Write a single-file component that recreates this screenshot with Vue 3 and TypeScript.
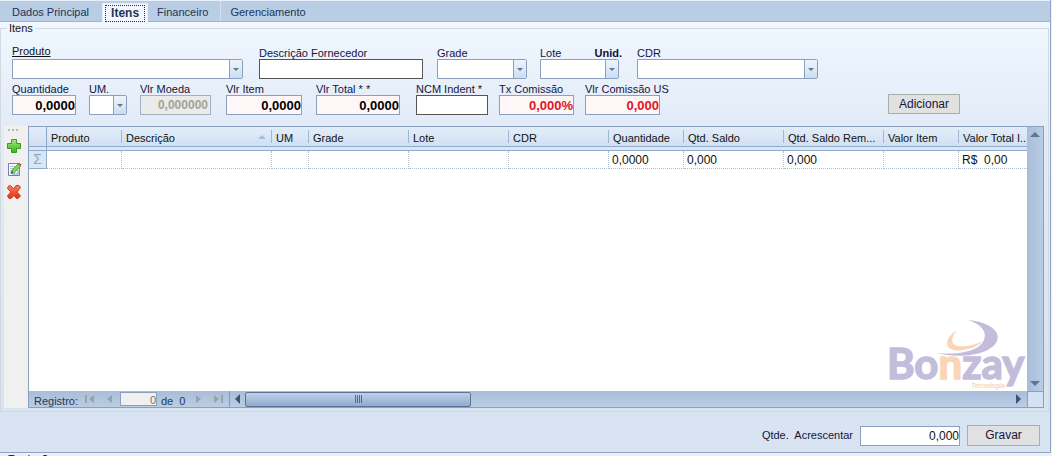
<script setup lang="ts">
import { ref } from 'vue'

interface Column {
  title: string
  width: number | null
  total: string
  sorted?: boolean
}

interface Field {
  id: string
  label: string
  kind: 'combo' | 'text'
  value?: string
  tone?: string
  note?: string
}

const tabs = ['Dados Principal', 'Itens', 'Financeiro', 'Gerenciamento']
const active = ref('Itens')

const firstRow: Field[] = [
  { id: 'produto', label: 'Produto', kind: 'combo' },
  { id: 'descricao', label: 'Descrição Fornecedor', kind: 'text', tone: 'plain' },
  { id: 'grade', label: 'Grade', kind: 'combo' },
  { id: 'lote', label: 'Lote', kind: 'combo', note: 'Unid.' },
  { id: 'cdr', label: 'CDR', kind: 'combo' },
]

const secondRow: Field[] = [
  { id: 'quantidade', label: 'Quantidade', kind: 'text', value: '0,0000', tone: 'number' },
  { id: 'um', label: 'UM.', kind: 'combo' },
  { id: 'moeda', label: 'Vlr Moeda', kind: 'text', value: '0,000000', tone: 'off' },
  { id: 'item', label: 'Vlr Item', kind: 'text', value: '0,0000', tone: 'number' },
  { id: 'total', label: 'Vlr Total * *', kind: 'text', value: '0,0000', tone: 'number' },
  { id: 'ncm', label: 'NCM Indent *', kind: 'text', tone: 'plain' },
  { id: 'taxa', label: 'Tx Comissão', kind: 'text', value: '0,000%', tone: 'red' },
  { id: 'comissao', label: 'Vlr Comissão US', kind: 'text', value: '0,000', tone: 'red' },
]

const rows = [firstRow, secondRow]

const columns: Column[] = [
  { title: 'Produto', width: 75, total: '' },
  { title: 'Descrição', width: 150, total: '', sorted: true },
  { title: 'UM', width: 37, total: '' },
  { title: 'Grade', width: 100, total: '' },
  { title: 'Lote', width: 100, total: '' },
  { title: 'CDR', width: 100, total: '' },
  { title: 'Quantidade', width: 75, total: '0,0000' },
  { title: 'Qtd. Saldo', width: 100, total: '0,000' },
  { title: 'Qtd. Saldo Rem...', width: 100, total: '0,000' },
  { title: 'Valor Item', width: 75, total: '' },
  { title: 'Valor Total I..', width: null, total: 'R$  0,00' },
]
</script>

<template>
  <div class="window">
    <main class="panel">
      <nav class="tabs" role="tablist">
        <button
          v-for="tab in tabs"
          :key="tab"
          type="button"
          role="tab"
          class="tab"
          :class="{ active: tab === active }"
          :aria-selected="tab === active"
          @click="active = tab"
        ><span>{{ tab }}</span></button>
      </nav>

      <fieldset class="group">
        <legend>Itens</legend>
        <div class="group-body">
          <form class="form" @submit.prevent>
            <div v-for="(row, index) in rows" :key="index" class="row">
              <div v-for="field in row" :key="field.id" class="field" :class="field.id">
                <div class="caption">
                  <label :for="field.id">{{ field.label }}</label>
                  <b v-if="field.note">{{ field.note }}</b>
                </div>
                <div v-if="field.kind === 'combo'" class="combo">
                  <select :id="field.id"><option></option></select>
                  <span class="drop"></span>
                </div>
                <input
                  v-else
                  :id="field.id"
                  type="text"
                  class="box"
                  :class="field.tone"
                  :value="field.value"
                  :disabled="field.tone === 'off'"
                />
              </div>
              <button v-if="index === 1" type="button" class="push add">Adicionar</button>
            </div>
          </form>

          <div class="work">
            <div class="tools">
              <span class="grip"><i></i><i></i><i></i></span>
              <button type="button" aria-label="Incluir">
                <svg viewBox="0 0 16 16">
                  <defs>
                    <linearGradient id="green" x2="0" y2="1"><stop stop-color="#a9e878" /><stop offset="1" stop-color="#35b51c" /></linearGradient>
                    <linearGradient id="fire" x2="0" y2="1"><stop stop-color="#f98262" /><stop offset="1" stop-color="#e92c0b" /></linearGradient>
                  </defs>
                  <path d="M5.500 1.500h5v4h4v5h-4v4h-5v-4h-4v-5h4z" fill="url(#green)" stroke="#379a27" stroke-linejoin="round" />
                </svg>
              </button>
              <button type="button" aria-label="Editar">
                <svg viewBox="0 0 16 16">
                  <path d="M2.500 2.500h11v12h-11z" fill="#f8faff" stroke="#7382a6" />
                  <path d="M4 5.500h5M4 7.500h4M4 9.500h2M4 11.500h2" stroke="#b7c4da" />
                  <path d="M6 13h6v-4" fill="none" stroke="#b5c8e3" stroke-width="2" />
                  <path d="M6 9l6-6 2.500 2.500-6 6L5 12.500z" fill="#7fd64c" stroke="#428c30" stroke-width=".7" />
                  <path d="M12 3l1-1.500 2.500 2-1 2z" fill="#d75448" />
                  <path d="M5 12.500l1-2.500 1.500 1.500z" fill="#2e522c" />
                </svg>
              </button>
              <button type="button" aria-label="Excluir">
                <svg viewBox="0 0 16 16">
                  <path d="M4.500 1.500L7.500 5l2.500-3.500h3l1.500 2-3.500 4.500 3.500 4-2.500 2.500h-1.500L8 11.500 5 14.500H3l-1.500-2.500L5 8 1.500 4.500l1-2.500z" fill="url(#fire)" stroke="#c93c25" stroke-linejoin="round" />
                </svg>
              </button>
            </div>

            <section class="grid">
              <div class="view">
                <table>
                  <colgroup>
                    <col class="marker" />
                    <col v-for="c in columns" :key="c.title" :style="c.width ? { width: c.width + 'px' } : {}" />
                  </colgroup>
                  <thead>
                    <tr>
                      <th class="first" aria-label="Linha"></th>
                      <th v-for="c in columns" :key="c.title">
                        <div class="head"><span>{{ c.title }}</span><i v-if="c.sorted" class="sort"></i></div>
                      </th>
                    </tr>
                  </thead>
                  <tbody>
                    <tr>
                      <th class="sum" scope="row">Σ</th>
                      <td v-for="c in columns" :key="c.title">{{ c.total }}</td>
                    </tr>
                  </tbody>
                </table>
                <svg class="logo" viewBox="0 0 139 72" role="img" aria-label="Bonzay Tecnologia">
                  <path d="M80 1C101 3 113 12 109 22C104 34 77 41 48 34C68 36 89 33 95 23C100 14 95 6 80 1Z" fill="#c3bddb" />
                  <path d="M69 11C63 18 62 26 70 27C78 28 87 26 95 22C87 31 66 34 61 29C56 24 61 16 69 11Z" fill="#fbd5b8" />
                  <text x="-1" y="60" class="brand">Bo<tspan class="warm">n</tspan>zay</text>
                  <text x="83" y="69" class="sub">Tecnologia</text>
                </svg>
              </div>
              <div class="vscroll"><i class="tri up"></i><i class="tri down"></i></div>
              <div class="bottom">
                <div class="navigator">
                  <label for="registro">Registro:</label>
                  <button type="button" aria-label="Primeiro"><svg viewBox="0 0 10 8"><path d="M0 0h2v8H0zM9 0v8L4 4z" /></svg></button>
                  <button type="button" aria-label="Anterior"><svg viewBox="0 0 10 8"><path d="M7 0v8L2 4z" /></svg></button>
                  <input id="registro" type="text" value="0" />
                  <span class="count">de&nbsp; 0</span>
                  <button type="button" aria-label="Próximo"><svg viewBox="0 0 10 8"><path d="M3 0v8l5-4z" /></svg></button>
                  <button type="button" aria-label="Último"><svg viewBox="0 0 10 8"><path d="M8 0h2v8H8zM1 0v8l5-4z" /></svg></button>
                </div>
                <div class="hscroll">
                  <i class="tri left"></i>
                  <div class="thumb"><i></i><i></i><i></i><i></i></div>
                  <i class="tri right"></i>
                </div>
              </div>
              <div class="corner"></div>
            </section>
          </div>
        </div>
      </fieldset>

      <footer class="footer">
        <label for="acrescentar">Qtde.&nbsp; Acrescentar</label>
        <input id="acrescentar" type="text" class="amount" value="0,000" />
        <button type="button" class="push save">Gravar</button>
      </footer>
    </main>
    <div class="below">Tradução</div>
  </div>
</template>

<style>
body {
  background: #f0f0f0;
}
</style>

<style scoped>
*,
*::after {
  box-sizing: border-box;
}
.window {
  height: 100vh;
  min-height: 300px;
  display: flex;
  flex-direction: column;
  overflow: hidden;
  font: 11px/13px "Liberation Sans", Arial, sans-serif;
  color: #15153c;
}
button,
input,
select {
  font: inherit;
  color: inherit;
  margin: 0;
  padding: 0;
  border-radius: 0;
}
.panel {
  flex: 1;
  min-height: 0;
  display: flex;
  flex-direction: column;
  margin-right: 1px;
  border: solid #8ea6c6;
  border-width: 0 1px 1px 0;
  background: linear-gradient(#f0f7fe 22px, #e3ebf8 125px, #d8e4f2 380px);
}
.tabs {
  display: flex;
  height: 22px;
  flex: none;
  padding-left: 1px;
  background: #b9cde5;
  border-top: 1px solid #e8f1fb;
  border-bottom: 1px solid #9db4d2;
}
.tab {
  border: 0;
  background: none;
  padding: 2px 12px 0 11px;
  color: #1e3358;
  border-right: 1px solid #b9cde5;
}
.tab:nth-child(3) {
  border-color: #d2dff0;
  padding-left: 9px;
}
.tab:nth-child(4) {
  padding-left: 9px;
}
.tab.active {
  margin-top: 2px;
  height: 19px;
  padding: 1px 2px 0;
  font-weight: bold;
  font-size: 12px;
  border: 1px solid #e5effa;
  border-bottom: 0;
  background: #f3f8fe;
}
.tab.active span {
  display: block;
  height: 17px;
  line-height: 15px;
  padding: 0 5px;
  border: 1px dotted #18365f;
}
.group {
  flex: 1;
  min-width: 0;
  min-height: 0;
  margin: 0 1px 0 0;
  padding: 0;
  border: 1px solid #d3d9e0;
}
.group legend {
  margin-left: 6px;
  padding: 0 2px;
  color: #111;
}
.group-body {
  height: 100%;
  display: flex;
  flex-direction: column;
}
.form {
  flex: none;
  padding: 8px 0 11px 11px;
}
.row {
  display: flex;
  align-items: flex-end;
}
.row + .row {
  margin-top: 2px;
}
.field {
  flex: none;
}
.caption {
  display: flex;
  justify-content: space-between;
  height: 14px;
  line-height: 16px;
  white-space: nowrap;
}
.produto { width: 231px; margin-right: 16px; }
.descricao { width: 164px; margin-right: 14px; }
.grade { width: 90px; margin-right: 13px; }
.lote { width: 79px; margin-right: 18px; }
.cdr { width: 181px; }
.quantidade { width: 64px; margin-right: 13px; }
.um { width: 38px; margin-right: 13px; }
.moeda { width: 71px; margin-right: 15px; }
.item { width: 76px; margin-right: 14px; }
.total { width: 84px; margin-right: 16px; }
.ncm { width: 72px; margin-right: 11px; }
.taxa { width: 75px; margin-right: 11px; }
.comissao { width: 75px; }
.produto .caption {
  margin-bottom: 2px;
  color: #111;
  text-decoration: underline;
}
.lote .caption {
  margin-right: -3px;
}
.caption b {
  color: #101038;
}
.combo {
  position: relative;
  height: 20px;
}
.combo select {
  display: block;
  width: 100%;
  height: 100%;
  appearance: none;
  background: #fff;
  border: 1px solid #8ba0bf;
  border-radius: 0 2px 2px 0;
}
.drop {
  position: absolute;
  top: 1px;
  right: 1px;
  bottom: 1px;
  width: 13px;
  display: flex;
  align-items: center;
  justify-content: center;
  border-left: 1px solid #8ba0bf;
  background: linear-gradient(#edf5fd, #cbddf0);
  pointer-events: none;
}
.drop::after {
  content: "";
  border: solid transparent;
  border-width: 3px 3px 0;
  border-top-color: #65758c;
}
.box {
  display: block;
  width: 100%;
  height: 20px;
  border: 1px solid #8ba0bf;
  background: #fff7f7;
  font-size: 13px;
  font-weight: bold;
  text-align: right;
  color: #000;
}
.box.plain {
  border-color: #555;
  background: #fff;
  text-align: left;
}
.box.off {
  padding-right: 2px;
  background: #ebebeb;
  font-size: 12px;
  color: #a5a295;
  border-color: #a3b0c3;
}
.box.red {
  color: #e0141f;
}
.push {
  border: 1px solid #adadad;
  background: #e1e1e1;
  font-size: 12px;
}
.add {
  width: 72px;
  height: 20px;
  margin: 0 88px 1px auto;
}
.work {
  flex: 1;
  min-height: 0;
  display: flex;
  padding: 0 4px 3px 3px;
}
.tools {
  width: 24px;
  flex: none;
  display: flex;
  flex-direction: column;
  align-items: flex-start;
  gap: 7px;
  padding: 3px 2px;
  background: #f0f0f0;
}
.grip {
  display: flex;
  gap: 2px;
  margin-left: 2px;
}
.grip i {
  width: 2px;
  height: 2px;
  background: #b8b8b8;
}
.tools button {
  display: flex;
  border: 0;
  background: none;
}
.tools svg {
  width: 16px;
  height: 16px;
}
.grid {
  flex: 1;
  min-width: 0;
  display: grid;
  grid-template: minmax(0, 1fr) 16px / minmax(0, 1fr) 16px;
  border: 1px solid #8ba0bf;
  background: #fff;
}
.view {
  position: relative;
  overflow: hidden;
}
table {
  width: 100%;
  table-layout: fixed;
  border-collapse: separate;
  border-spacing: 0;
  color: #111;
}
.marker {
  width: 18px;
}
th,
td {
  padding: 0;
  text-align: left;
  font-weight: normal;
}
thead th {
  height: 24px;
  vertical-align: top;
  border-bottom: 1px solid #8fa9c8;
  background: linear-gradient(#e2edf9, #d0e0f2 19px, #8fa9c8 19px, #8fa9c8 20px, #dbe7f5 20px);
}
thead .first {
  border-right: 1px solid #8fa9c8;
}
.head {
  display: flex;
  align-items: center;
  height: 13px;
  margin-top: 3px;
  padding-left: 4px;
  border-right: 1px solid #9fb5d0;
}
.head span {
  white-space: nowrap;
  padding-top: 3px;
}
thead th:last-child .head {
  border: 0;
}
.sort {
  margin: 0 5px 0 auto;
  border: solid transparent;
  border-width: 0 4px 4px;
  border-bottom-color: #9dc0ea;
}
tbody td {
  height: 18px;
  padding: 2px 0 0 3px;
  font-size: 12px;
  white-space: pre;
  overflow: hidden;
  border: dotted #aebfce;
  border-width: 0 1px 1px 0;
}
tbody td:last-child {
  border-right: 0;
}
.sum {
  height: 18px;
  text-align: center;
  font-size: 14px;
  color: #8ea7c6;
  background: #d9e6f4;
  border: solid #8fa9c8;
  border-width: 0 1px 1px 0;
}
.logo {
  position: absolute;
  right: 0;
  bottom: 0;
  width: 139px;
  height: 72px;
}
.brand {
  font: bold 42px Lato, sans-serif;
  fill: #c3bddb;
  stroke: #c3bddb;
  stroke-width: 1.5px;
}
.warm {
  fill: #fbd5b8;
  stroke: #fbd5b8;
}
.sub {
  font: italic 7px "Liberation Sans", Arial, sans-serif;
  fill: #f5c6a6;
}
.vscroll {
  display: flex;
  flex-direction: column;
  justify-content: space-between;
  align-items: center;
  padding: 5px 0;
  background: linear-gradient(90deg, #a9bdd8, #b9cce4);
}
.tri {
  flex: none;
  border: 5px solid transparent;
}
.up { border-top: 0; border-bottom-color: #5c7599; }
.down { border-bottom: 0; border-top-color: #5c7599; }
.left { border-left: 0; border-right-color: #3c5478; }
.right { border-right: 0; border-left-color: #3c5478; }
.bottom {
  display: flex;
  min-width: 0;
  background: linear-gradient(#a9bdd8, #bbcde4);
}
.navigator {
  flex: none;
  width: 201px;
  display: flex;
  align-items: center;
  padding-left: 5px;
  border-right: 1px solid #7f9abd;
  color: #23395a;
}
.navigator label {
  width: 46px;
  padding-top: 4px;
}
.navigator button {
  display: flex;
  width: 20px;
  padding-left: 5px;
  border: 0;
  background: none;
}
.navigator svg {
  width: 10px;
  height: 8px;
  fill: #97a3a6;
}
.navigator input {
  width: 37px;
  height: 14px;
  padding-top: 2px;
  border: 1px solid #8ba0bf;
  background: #f0f0f0;
  text-align: right;
  color: #777;
}
.count {
  width: 31px;
  padding: 4px 0 0 4px;
  white-space: nowrap;
}
.hscroll {
  flex: 1;
  display: flex;
  align-items: center;
  padding: 0 6px 0 5px;
}
.thumb {
  width: 226px;
  height: 15px;
  margin: 0 auto 0 5px;
  display: flex;
  justify-content: center;
  align-items: center;
  gap: 1px;
  border: 1px solid #5a7396;
  border-radius: 2px;
  background: linear-gradient(#bdd0e7, #8fabce);
}
.thumb i {
  width: 1px;
  height: 8px;
  background: #50698d;
}
.corner {
  background: #d3e1f2;
  border: solid #8ba0bf;
  border-width: 1px 0 0 1px;
}
.footer {
  flex: none;
  display: flex;
  align-items: center;
  justify-content: flex-end;
  height: 40px;
  padding: 7px 10px 0 0;
}
.amount {
  width: 100px;
  height: 20px;
  margin: 0 7px;
  border: 1px solid #8ba0bf;
  background: #fff;
  font-size: 12px;
  text-align: right;
  color: #111;
}
.save {
  width: 73px;
  height: 21px;
}
.below {
  flex: none;
  height: 3px;
  padding-left: 8px;
  color: #111;
}
</style>
